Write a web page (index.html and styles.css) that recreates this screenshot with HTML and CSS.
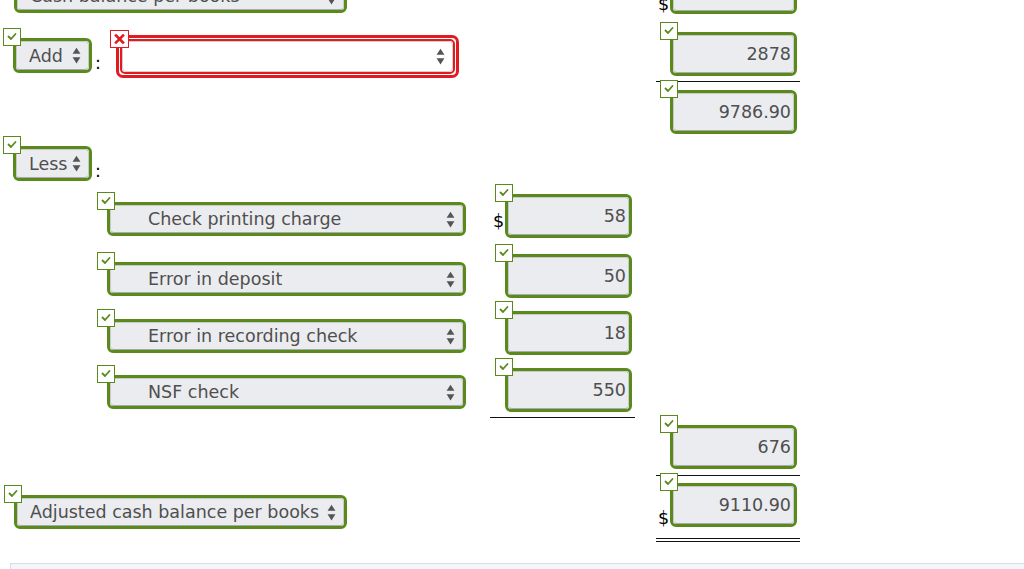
FILE: index.html
```html
<!DOCTYPE html>
<html>
<head>
<meta charset="utf-8">
<link rel="stylesheet" href="styles.css">
</head>
<body>
<div class="sheet">

  <div class="row r0">
    <div class="ca">
      <div class="gf sel-w mt10 ml14"><div class="sel"><span>Cash balance per books</span><svg class="arr" viewBox="0 0 8 15"><polygon points="0.5,6 4,0.5 7.5,6"/><polygon points="0.5,9 4,14.5 7.5,9"/></svg></div></div>
    </div>
    <div class="cb"></div>
    <div class="gap"></div>
    <div class="cc">
      <span class="cur cur-c">$</span>
      <div class="gf inp-w mt1"><div class="inp"></div></div>
    </div>
  </div>

  <div class="row r1">
    <div class="ca">
      <div class="gf sel-s mt24 ml13"><span class="ok"><svg viewBox="0 0 16 16"><polyline points="4.5,7.5 7,10 11.5,5"/></svg></span><div class="sel"><span>Add</span><svg class="arr" viewBox="0 0 8 15"><polygon points="0.5,6 4,0.5 7.5,6"/><polygon points="0.5,9 4,14.5 7.5,9"/></svg></div></div>
      <span class="colon c1">:</span>
      <div class="bad mt21"><span class="no"><svg viewBox="0 0 16 16"><path d="M4.5 4.5 L11.5 11.5 M11.5 4.5 L4.5 11.5"/></svg></span><div class="bad-in"><div class="sel white"><span></span><svg class="arr" viewBox="0 0 8 15"><polygon points="0.5,6 4,0.5 7.5,6"/><polygon points="0.5,9 4,14.5 7.5,9"/></svg></div></div></div>
    </div>
    <div class="cb"></div>
    <div class="gap"></div>
    <div class="cc rule">
      <span class="cur"></span>
      <div class="gf inp-w mt18"><span class="ok"><svg viewBox="0 0 16 16"><polyline points="4.5,7.5 7,10 11.5,5"/></svg></span><div class="inp">2878</div></div>
    </div>
  </div>

  <div class="row r2">
    <div class="ca"></div>
    <div class="cb"></div>
    <div class="gap"></div>
    <div class="cc">
      <span class="cur"></span>
      <div class="gf inp-w mt8"><span class="ok"><svg viewBox="0 0 16 16"><polyline points="4.5,7.5 7,10 11.5,5"/></svg></span><div class="inp">9786.90</div></div>
    </div>
  </div>

  <div class="row r3">
    <div class="ca">
      <div class="gf sel-s mt10 ml13"><span class="ok"><svg viewBox="0 0 16 16"><polyline points="4.5,7.5 7,10 11.5,5"/></svg></span><div class="sel"><span>Less</span><svg class="arr" viewBox="0 0 8 15"><polygon points="0.5,6 4,0.5 7.5,6"/><polygon points="0.5,9 4,14.5 7.5,9"/></svg></div></div>
      <span class="colon c3">:</span>
    </div>
    <div class="cb"></div>
    <div class="gap"></div>
    <div class="cc"></div>
  </div>

  <div class="row r4">
    <div class="ca">
      <div class="gf sel-l mt12 ml107"><span class="ok"><svg viewBox="0 0 16 16"><polyline points="4.5,7.5 7,10 11.5,5"/></svg></span><div class="sel ind"><span>Check printing charge</span><svg class="arr" viewBox="0 0 8 15"><polygon points="0.5,6 4,0.5 7.5,6"/><polygon points="0.5,9 4,14.5 7.5,9"/></svg></div></div>
    </div>
    <div class="cb">
      <span class="cur cur-a">$</span>
      <div class="gf inp-w mt4"><span class="ok"><svg viewBox="0 0 16 16"><polyline points="4.5,7.5 7,10 11.5,5"/></svg></span><div class="inp">58</div></div>
    </div>
    <div class="gap"></div>
    <div class="cc"></div>
  </div>

  <div class="row r5">
    <div class="ca">
      <div class="gf sel-l mt12 ml107"><span class="ok"><svg viewBox="0 0 16 16"><polyline points="4.5,7.5 7,10 11.5,5"/></svg></span><div class="sel ind"><span>Error in deposit</span><svg class="arr" viewBox="0 0 8 15"><polygon points="0.5,6 4,0.5 7.5,6"/><polygon points="0.5,9 4,14.5 7.5,9"/></svg></div></div>
    </div>
    <div class="cb">
      <span class="cur"></span>
      <div class="gf inp-w mt4"><span class="ok"><svg viewBox="0 0 16 16"><polyline points="4.5,7.5 7,10 11.5,5"/></svg></span><div class="inp">50</div></div>
    </div>
    <div class="gap"></div>
    <div class="cc"></div>
  </div>

  <div class="row r6">
    <div class="ca">
      <div class="gf sel-l mt12 ml107"><span class="ok"><svg viewBox="0 0 16 16"><polyline points="4.5,7.5 7,10 11.5,5"/></svg></span><div class="sel ind"><span>Error in recording check</span><svg class="arr" viewBox="0 0 8 15"><polygon points="0.5,6 4,0.5 7.5,6"/><polygon points="0.5,9 4,14.5 7.5,9"/></svg></div></div>
    </div>
    <div class="cb">
      <span class="cur"></span>
      <div class="gf inp-w mt4"><span class="ok"><svg viewBox="0 0 16 16"><polyline points="4.5,7.5 7,10 11.5,5"/></svg></span><div class="inp">18</div></div>
    </div>
    <div class="gap"></div>
    <div class="cc"></div>
  </div>

  <div class="row r7">
    <div class="ca">
      <div class="gf sel-l mt11 ml107"><span class="ok"><svg viewBox="0 0 16 16"><polyline points="4.5,7.5 7,10 11.5,5"/></svg></span><div class="sel ind"><span>NSF check</span><svg class="arr" viewBox="0 0 8 15"><polygon points="0.5,6 4,0.5 7.5,6"/><polygon points="0.5,9 4,14.5 7.5,9"/></svg></div></div>
    </div>
    <div class="cb rule">
      <span class="cur"></span>
      <div class="gf inp-w mt4"><span class="ok"><svg viewBox="0 0 16 16"><polyline points="4.5,7.5 7,10 11.5,5"/></svg></span><div class="inp">550</div></div>
    </div>
    <div class="gap"></div>
    <div class="cc"></div>
  </div>

  <div class="row r8">
    <div class="ca"></div>
    <div class="cb"></div>
    <div class="gap"></div>
    <div class="cc rule">
      <span class="cur"></span>
      <div class="gf inp-w mt7"><span class="ok"><svg viewBox="0 0 16 16"><polyline points="4.5,7.5 7,10 11.5,5"/></svg></span><div class="inp">676</div></div>
    </div>
  </div>

  <div class="row r9">
    <div class="ca">
      <div class="gf sel-w mt19 ml14"><span class="ok"><svg viewBox="0 0 16 16"><polyline points="4.5,7.5 7,10 11.5,5"/></svg></span><div class="sel"><span>Adjusted cash balance per books</span><svg class="arr" viewBox="0 0 8 15"><polygon points="0.5,6 4,0.5 7.5,6"/><polygon points="0.5,9 4,14.5 7.5,9"/></svg></div></div>
    </div>
    <div class="cb"></div>
    <div class="gap"></div>
    <div class="cc dbl">
      <span class="cur cur-b">$</span>
      <div class="gf inp-w mt7"><span class="ok"><svg viewBox="0 0 16 16"><polyline points="4.5,7.5 7,10 11.5,5"/></svg></span><div class="inp">9110.90</div></div>
    </div>
  </div>

  <div class="panel"></div>
</div>
</body>
</html>
```

FILE: styles.css
```css
* { box-sizing: border-box; }
html, body { margin: 0; padding: 0; background: #fff; overflow: hidden; }
body {
  font-family: "DejaVu Sans", Verdana, sans-serif;
  font-size: 17.5px;
  color: #000;
}
.sheet { margin-top: -31px; width: 1024px; }

.row { display: flex; }
.r0 { height: 45px; }
.r1 { height: 68px; }
.r2 { height: 54px; }
.r3 { height: 54px; }
.r4 { height: 60px; }
.r5 { height: 57px; }
.r6 { height: 57px; }
.r7 { height: 54px; }
.r8 { height: 58px; }
.r9 { height: 66px; }

.ca { width: 490px; display: flex; align-items: flex-start; }
.cb { width: 145px; display: flex; align-items: flex-start; padding-left: 3px; }
.gap { width: 21px; }
.cc { width: 144px; display: flex; align-items: flex-start; padding-left: 2px; }

.rule { border-bottom: 1px solid #111; }
.dbl { border-bottom: 4px double #111; }

.cur { width: 12px; flex: none; line-height: 17.5px; color: #000; }
.cur-a { margin-top: 23px; }
.cur-b { margin-top: 34px; }
.cur-c { margin-top: 27px; }

.mt1 { margin-top: 1px; }
.mt4 { margin-top: 4px; }
.mt7 { margin-top: 7px; }
.mt8 { margin-top: 8px; }
.mt10 { margin-top: 10px; }
.mt11 { margin-top: 11px; }
.mt12 { margin-top: 12px; }
.mt18 { margin-top: 18px; }
.mt19 { margin-top: 19px; }
.mt21 { margin-top: 21px; }
.mt24 { margin-top: 24px; }
.ml13 { margin-left: 13px; }
.ml14 { margin-left: 14px; }
.ml107 { margin-left: 107px; }

/* green-correct field wrapper */
.gf {
  position: relative;
  border: 3px solid #5a8a1b;
  border-radius: 6px;
  background: #fff;
  flex: none;
}
.sel-s { width: 79px; height: 35px; }
.sel-w { width: 333px; height: 34px; }
.sel-l { width: 359px; height: 34px; }
.inp-w { width: 127px; height: 44px; }

.sel {
  height: 100%;
  display: flex;
  align-items: center;
  justify-content: space-between;
  background: #ebecef;
  border: 1px solid #c9c9cc;
  border-bottom-color: #a9a9ad;
  border-radius: 4px;
  padding: 0 7px 0 12px;
  color: #4f4f4f;
  white-space: nowrap;
}
.sel.ind { padding-left: 37px; }
.sel.white { background: #fff; border-color: #cfcfcf; }
.arr { width: 9px; height: 17px; flex: none; fill: #555; }

.inp {
  height: 100%;
  background: #ebecef;
  border: 1px solid #c9c9cc;
  border-bottom-color: #a9a9ad;
  border-radius: 4px;
  text-align: right;
  padding-right: 2px;
  line-height: 36px;
  color: #4f4f4f;
}

/* badges */
.ok {
  position: absolute;
  left: -13px;
  top: -13px;
  width: 18px;
  height: 18px;
  background: #fff;
  border: 1px solid #5a8a1b;
  z-index: 2;
}
.ok svg { display: block; width: 16px; height: 16px; fill: none; stroke: #5a8a1b; stroke-width: 1.8; stroke-linecap: round; stroke-linejoin: round; }

.no {
  position: absolute;
  left: -9px;
  top: -8px;
  width: 19px;
  height: 18px;
  background: #fff;
  border: 1px solid #e11b22;
  z-index: 2;
}
.no svg { display: block; width: 17px; height: 16px; fill: none; stroke: #e11b22; stroke-width: 2.6; stroke-linecap: square; }

.colon { line-height: 17.5px; margin-left: 3px; color: #000; flex: none; }
.c1 { margin-top: 41px; }
.c3 { margin-top: 27px; }

/* incorrect (red) field */
.bad {
  position: relative;
  margin-left: 15px;
  width: 343px;
  height: 43px;
  border: 3px solid #e11b22;
  border-radius: 7px;
  padding: 1px;
  background: #fff;
  flex: none;
}
.bad-in {
  height: 100%;
  border: 2px solid #e11b22;
  border-radius: 5px;
  padding: 0;
}

.panel {
  margin-top: 21px;
  margin-left: 10px;
  height: 40px;
  background: #f4f6f9;
  border-top: 1px solid #d6dde7;
  border-left: 1px solid #d6dde7;
}
```
